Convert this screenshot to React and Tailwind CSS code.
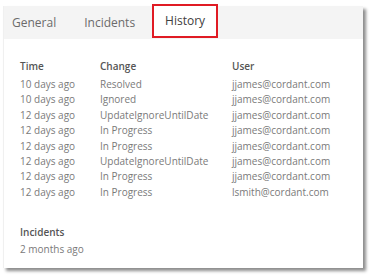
export default function App() {
  const rows = [
    ["10 days ago", "Resolved", "jjames@cordant.com"],
    ["10 days ago", "Ignored", "jjames@cordant.com"],
    ["12 days ago", "UpdateIgnoreUntilDate", "jjames@cordant.com"],
    ["12 days ago", "In Progress", "jjames@cordant.com"],
    ["12 days ago", "In Progress", "jjames@cordant.com"],
    ["12 days ago", "UpdateIgnoreUntilDate", "jjames@cordant.com"],
    ["12 days ago", "In Progress", "jjames@cordant.com"],
    ["12 days ago", "In Progress", "lsmith@cordant.com"],
  ];
  return (
    <div className="w-[375px] h-[280px] bg-white pl-[3px] pt-[6px]" style={{ fontFamily: '"Open Sans", sans-serif' }}>
      <div className="w-[360px] h-[262px] bg-white shadow-[3px_3px_3px_rgba(0,0,0,0.45)] border-l border-[#f0f0f0]">
        <div className="h-[33px] bg-[#f4f4f4] flex items-center text-[12px] text-[#6b6b6b]">
          <span className="ml-[8px]">General</span>
          <span className="ml-[28px]">Incidents</span>
          <span className="ml-[17px] -mt-[3px] h-[34px] w-[66px] border-2 border-[#e01b24] bg-white flex items-center justify-center text-[#404040]">History</span>
        </div>
        <div className="pl-[16px] pt-[20px] text-[10px] leading-[15.4px] text-[#7a7a7a]">
          <div className="grid grid-cols-[80px_132px_1fr]">
            <div className="font-semibold text-[#555] mb-[2.6px]">Time</div>
            <div className="font-semibold text-[#555] mb-[2.6px]">Change</div>
            <div className="font-semibold text-[#555] mb-[2.6px]">User</div>
            {rows.map((r, i) => [
              <div key={"a" + i}>{r[0]}</div>,
              <div key={"b" + i}>{r[1]}</div>,
              <div key={"c" + i}>{r[2]}</div>,
            ])}
          </div>
          <div className="mt-[25px] font-semibold text-[#555]">Incidents</div>
          <div className="mt-[1px]">2 months ago</div>
        </div>
      </div>
    </div>
  );
}
